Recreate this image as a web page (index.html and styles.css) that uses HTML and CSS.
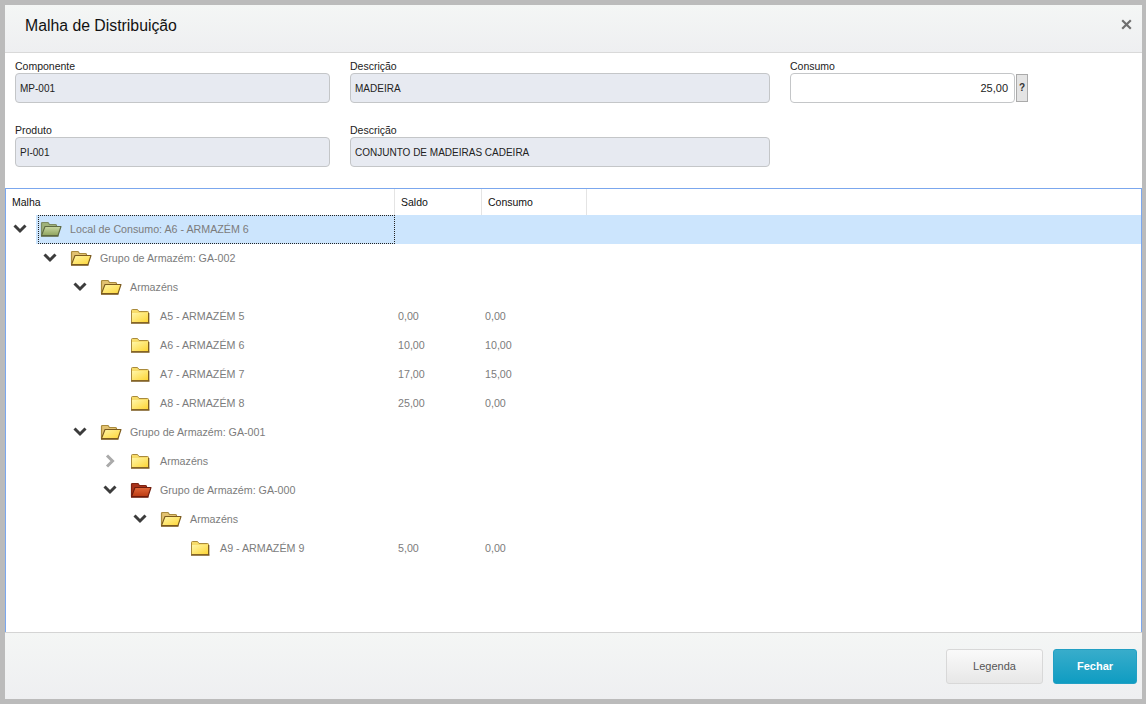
FILE: index.html
```html
<!DOCTYPE html>
<html lang="pt">
<head>
<meta charset="utf-8">
<title>Malha de Distribuição</title>
<link rel="stylesheet" href="styles.css">
</head>
<body>
<svg class="defs" width="0" height="0" aria-hidden="true">
  <defs>
    <linearGradient id="gy" x1="0" y1="0" x2="1" y2="1"><stop offset="0" stop-color="#fff6a8"/><stop offset="1" stop-color="#fdd535"/></linearGradient>
    <linearGradient id="gg" x1="0" y1="0" x2="0" y2="1"><stop offset="0" stop-color="#c9d8a2"/><stop offset="1" stop-color="#8fa35e"/></linearGradient>
    <linearGradient id="gr" x1="0" y1="0" x2="0" y2="1"><stop offset="0" stop-color="#e2683a"/><stop offset="1" stop-color="#bb3a12"/></linearGradient>
    <symbol id="closed" viewBox="0 0 20 16">
      <path d="M1.500 14.500V2.500q0-1 1-1h5l1.500 2h8.500q1 0 1 1v10z" fill="#f7dc6a" stroke="#a98a3c"/>
      <path d="M2 5h16v9H2z" fill="url(#gy)"/>
      <path d="M1 15h18.500M18.700 5v10" stroke="#7b5a1e" stroke-width="1.300"/>
    </symbol>
    <symbol id="open" viewBox="0 0 22 16">
      <path d="M1.500 14.500V2.500q0-1 1-1h5.500l1.500 2h6q1 0 1 1v2" fill="var(--back)" stroke="var(--edge)" stroke-width="1.200"/>
      <path d="M1.500 14.500L5 5.500h16l-3 9z" fill="var(--front)" stroke="var(--line)" stroke-width="1.100" stroke-linejoin="round"/>
      <path d="M1 15h17.500" stroke="var(--line)" stroke-width="1.600"/>
    </symbol>
  </defs>
</svg>
<main class="dialog">
  <header class="head">
    <h1 class="title">Malha de Distribuição</h1>
    <svg class="close" viewBox="0 0 11 11" aria-label="Fechar"><path d="M1.200 1.200l8.600 8.600M9.800 1.200l-8.600 8.600"/></svg>
  </header>
  <section class="form">
    <div class="field"><label class="lab">Componente</label><div class="inp ro">MP-001</div></div>
    <div class="field"><label class="lab">Descrição</label><div class="inp ro">MADEIRA</div></div>
    <div class="field"><label class="lab">Consumo</label><div class="withhelp"><div class="inp num">25,00</div><span class="help">?</span></div></div>
    <div class="field"><label class="lab">Produto</label><div class="inp ro">PI-001</div></div>
    <div class="field"><label class="lab">Descrição</label><div class="inp ro">CONJUNTO DE MADEIRAS CADEIRA</div></div>
  </section>
  <section class="tree">
    <div class="thead">
      <div class="th c1">Malha</div><div class="th c2">Saldo</div><div class="th c3">Consumo</div>
    </div>
    <div class="tbody">
      <div class="row sel">
        <div class="c1 cell focus d0"><svg class="arrow" viewBox="0 0 14 10"><path d="M1.500 1.500l5.500 5.500 5.500-5.500"/></svg><svg class="fo green"><use href="#open"/></svg><span class="t">Local de Consumo: A6 - ARMAZÉM 6</span></div>
      </div>
      <div class="row"><div class="c1 cell d1"><svg class="arrow" viewBox="0 0 14 10"><path d="M1.500 1.500l5.500 5.500 5.500-5.500"/></svg><svg class="fo yellow"><use href="#open"/></svg><span class="t">Grupo de Armazém: GA-002</span></div></div>
      <div class="row"><div class="c1 cell d2"><svg class="arrow" viewBox="0 0 14 10"><path d="M1.500 1.500l5.500 5.500 5.500-5.500"/></svg><svg class="fo yellow"><use href="#open"/></svg><span class="t">Armazéns</span></div></div>
      <div class="row"><div class="c1 cell d3"><span class="noarrow"></span><svg class="fc"><use href="#closed"/></svg><span class="t">A5 - ARMAZÉM 5</span></div><div class="c2 v">0,00</div><div class="c3 v">0,00</div></div>
      <div class="row"><div class="c1 cell d3"><span class="noarrow"></span><svg class="fc"><use href="#closed"/></svg><span class="t">A6 - ARMAZÉM 6</span></div><div class="c2 v">10,00</div><div class="c3 v">10,00</div></div>
      <div class="row"><div class="c1 cell d3"><span class="noarrow"></span><svg class="fc"><use href="#closed"/></svg><span class="t">A7 - ARMAZÉM 7</span></div><div class="c2 v">17,00</div><div class="c3 v">15,00</div></div>
      <div class="row"><div class="c1 cell d3"><span class="noarrow"></span><svg class="fc"><use href="#closed"/></svg><span class="t">A8 - ARMAZÉM 8</span></div><div class="c2 v">25,00</div><div class="c3 v">0,00</div></div>
      <div class="row"><div class="c1 cell d2"><svg class="arrow" viewBox="0 0 14 10"><path d="M1.500 1.500l5.500 5.500 5.500-5.500"/></svg><svg class="fo yellow"><use href="#open"/></svg><span class="t">Grupo de Armazém: GA-001</span></div></div>
      <div class="row"><div class="c1 cell d3"><svg class="arrow right" viewBox="0 0 14 14"><path d="M4 1.500l5.500 5.500-5.500 5.500"/></svg><svg class="fc"><use href="#closed"/></svg><span class="t">Armazéns</span></div></div>
      <div class="row"><div class="c1 cell d3"><svg class="arrow" viewBox="0 0 14 10"><path d="M1.500 1.500l5.500 5.500 5.500-5.500"/></svg><svg class="fo red"><use href="#open"/></svg><span class="t">Grupo de Armazém: GA-000</span></div></div>
      <div class="row"><div class="c1 cell d4"><svg class="arrow" viewBox="0 0 14 10"><path d="M1.500 1.500l5.500 5.500 5.500-5.500"/></svg><svg class="fo yellow"><use href="#open"/></svg><span class="t">Armazéns</span></div></div>
      <div class="row"><div class="c1 cell d5"><span class="noarrow"></span><svg class="fc"><use href="#closed"/></svg><span class="t">A9 - ARMAZÉM 9</span></div><div class="c2 v">5,00</div><div class="c3 v">0,00</div></div>
    </div>
  </section>
  <footer class="foot">
    <button class="btn light">Legenda</button>
    <button class="btn primary">Fechar</button>
  </footer>
</main>
</body>
</html>
```
FILE: styles.css
```css
* { box-sizing: border-box; }
html, body { height: 100%; }
body {
  margin: 0;
  padding: 5px 4px 5px 5px;
  background: #bbbbbb;
  font-family: "Liberation Sans", Arial, sans-serif;
  font-size: 10.7px;
  overflow: hidden;
}
.defs { position: absolute; }
.dialog {
  height: 694px;
  background: #fff;
  display: flex;
  flex-direction: column;
}
.head {
  height: 48px;
  flex: none;
  display: flex;
  align-items: center;
  justify-content: space-between;
  padding: 0 10px 6px 20px;
  background: linear-gradient(#f4f6f5, #eeeff1);
  border-bottom: 1px solid #d9d9d9;
}
.title {
  margin: 0;
  font-size: 15.8px;
  font-weight: 400;
  color: #111;
}
.close {
  width: 11px;
  height: 11px;
  margin-bottom: 3px;
}
.close path { fill: none; stroke: #6f6f6f; stroke-width: 2.2; }
.form {
  flex: none;
  height: 135px;
  padding: 6px 0 0 10px;
  display: grid;
  grid-template-columns: 315px 420px 238px;
  grid-auto-rows: 64px;
  column-gap: 20px;
  align-content: start;
}
.field { display: flex; flex-direction: column; }
.lab { height: 14px; line-height: 14px; font-size: 10.5px; color: #222; }
.inp {
  height: 30px;
  line-height: 28px;
  padding: 1px 4px 0;
  border: 1px solid #c4c6c8;
  border-radius: 4px;
  font-size: 10px;
  color: #222;
}
.ro { background: #e7eaf1; }
.num { background: #fff; text-align: right; padding-right: 6px; padding-top: 0; width: 225px; font-size: 11px; }
.withhelp { display: flex; align-items: center; gap: 1px; }
.help {
  width: 12px;
  height: 28px;
  line-height: 26px;
  text-align: center;
  background: #e4e4e4;
  border: 1px solid #aaa;
  font-weight: 700;
  font-size: 10px;
  color: #333;
}
.tree {
  flex: none;
  height: 444px;
  border: 1px solid #7ba7ee;
  border-bottom: 0;
  overflow: hidden;
}
.thead { display: flex; height: 26px; }
.th {
  line-height: 26px;
  font-size: 10.5px;
  color: #111;
  padding-left: 6px;
  border-right: 1px solid #e4e4e4;
}
.c1 { width: 389px; flex: none; }
.c2 { width: 87px; flex: none; }
.c3 { width: 105px; flex: none; }
.row {
  display: flex;
  height: 29px;
  color: #7c7c7c;
}
.sel { background: linear-gradient(90deg, #fff 30px, #cce5fd 30px); }
.cell { display: flex; align-items: center; height: 29px; padding-bottom: 2px; }
.focus { outline: 1px dotted #222; outline-offset: -1px; margin-left: 32px; width: 357px; padding-left: 2px; }
.focus .arrow { margin-left: -27px; margin-right: 13px; }
.d1 { padding-left: 37px; }
.d2 { padding-left: 67px; }
.d3 { padding-left: 97px; }
.d4 { padding-left: 127px; }
.d5 { padding-left: 157px; }
.arrow, .noarrow { width: 14px; height: 10px; flex: none; margin-right: 13px; }
.arrow path { fill: none; stroke: #3c3c3c; stroke-width: 3; }
.arrow.right { height: 14px; }
.arrow.right path { stroke: #aaa; }
.fo { width: 22px; height: 16px; flex: none; margin-right: 8px; }
.fc { width: 20px; height: 16px; flex: none; margin-right: 10px; }
.green { --back: #9fb27a; --front: url(#gg); --line: #5e6a44; --edge: #7d8a60; }
.yellow { --back: #e2c271; --front: url(#gy); --line: #7b5a1e; --edge: #a98a3c; }
.red { --back: #a8321a; --front: url(#gr); --line: #6e1c0c; --edge: #7e2412; }
.t { white-space: nowrap; }
.v { padding-left: 3px; line-height: 29px; }
.foot {
  flex: 1;
  display: flex;
  justify-content: flex-end;
  align-items: center;
  gap: 10px;
  padding: 0 5px 0 0;
  background: linear-gradient(#f4f6f5, #eeeff1);
  border-top: 1px solid #d4d4d4;
}
.btn {
  width: 97px;
  height: 35px;
  border-radius: 3px;
  font-family: inherit;
  font-size: 11px;
}
.light {
  border: 1px solid #d8d8d8;
  background: linear-gradient(#fafafa, #e7e7e7);
  color: #555;
}
.primary {
  width: 84px;
  border: 1px solid #22a0c4;
  background: linear-gradient(#38adcb, #0f9cc2);
  color: #fff;
  font-weight: 700;
}
```
